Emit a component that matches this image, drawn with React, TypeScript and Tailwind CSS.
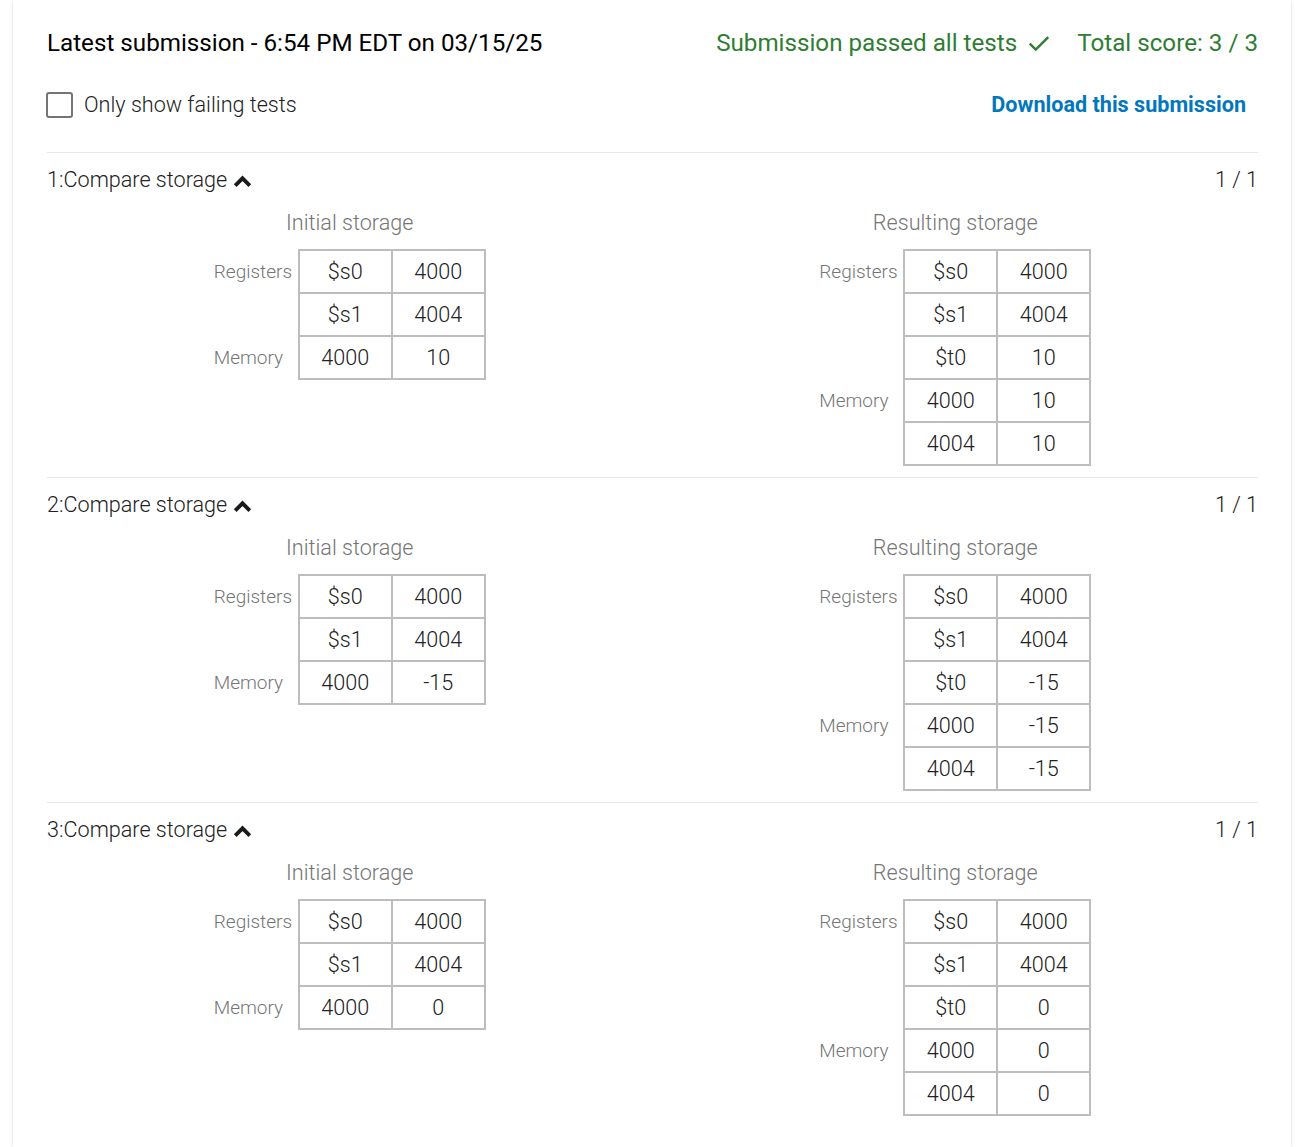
import React from "react";

type Row = [string, string];
type Storage = { regs: Row[]; mem: Row[] };
type Test = { id: number; initial: Storage; result: Storage };

const mk = (v: string): Storage[] => [
  { regs: [["$s0", "4000"], ["$s1", "4004"]], mem: [["4000", v]] },
  { regs: [["$s0", "4000"], ["$s1", "4004"], ["$t0", v]], mem: [["4000", v], ["4004", v]] },
];

const tests: Test[] = ["10", "-15", "0"].map((v, i) => {
  const [initial, result] = mk(v);
  return { id: i + 1, initial, result };
});

function Chevron() {
  return (
    <svg width="19" height="12" viewBox="0 0 19 12" className="ml-[6px] mt-[1px]">
      <path d="M2.2 10.6 L9.5 3.3 L16.8 10.6" fill="none" stroke="#1a1a1a" strokeWidth="3.8" strokeLinejoin="miter" />
    </svg>
  );
}

function Check() {
  return (
    <svg width="26" height="26" viewBox="0 0 24 24" className="ml-[9px]">
      <path d="M3.5 12.5 L9 18 L20.5 6.5" fill="none" stroke="#2e7d32" strokeWidth="2.2" />
    </svg>
  );
}

function StorageTable({ title, s }: { title: string; s: Storage }) {
  const rows = [...s.regs, ...s.mem];
  return (
    <div className="flex flex-col items-center">
      <div className="h-[28px] leading-[28px] text-[21.6px] font-light text-[#757575]">{title}</div>
      <div className="mt-[12px] flex">
        <div className="w-[84px] pt-[2px] text-[19px] font-light text-[#757575]">
          <div className="leading-[41px]" style={{ height: s.regs.length * 43 }}>
            Registers
          </div>
          <div className="leading-[41px]" style={{ height: s.mem.length * 43 }}>
            Memory
          </div>
        </div>
        <div className="grid grid-cols-[91px_91px] gap-[2px] p-[2px] bg-[#bdbdbd]">
          {rows.map((r, i) => (
            <React.Fragment key={i}>
              <div className="h-[41px] pt-[1px] bg-white flex items-center justify-center text-[21.6px] font-light text-[#212121]">
                {r[0]}
              </div>
              <div className="h-[41px] pt-[1px] bg-white flex items-center justify-center text-[21.6px] font-light text-[#212121]">
                {r[1]}
              </div>
            </React.Fragment>
          ))}
        </div>
      </div>
    </div>
  );
}

export default function App() {
  return (
    <div className="bg-white min-h-[1147px] w-full font-['Roboto',sans-serif]">
      <div className="ml-[13px] w-[1278px] min-h-[1147px] bg-white shadow-[0_0_3px_rgba(0,0,0,0.16)] pt-[28px] pl-[34px] pr-[33px]">
        <div className="flex items-center justify-between h-[30px]">
          <div className="text-[24.2px] text-black">Latest submission - 6:54 PM EDT on 03/15/25</div>
          <div className="flex items-center text-[24.2px] text-[#2e7d32]">
            <span>Submission passed all tests</span>
            <Check />
            <span className="ml-[25px]">Total score: 3 / 3</span>
          </div>
        </div>
        <div className="mt-[32px] flex items-center justify-between h-[30px]">
          <label className="flex items-center">
            <span className="-ml-[1px] w-[27px] h-[26px] border-2 border-[#757575] rounded-[3px] bg-white" />
            <span className="ml-[11px] text-[21.6px] font-light text-[#212121]">Only show failing tests</span>
          </label>
          <a className="mr-[12px] text-[21.6px] font-bold text-[#0277bd]">Download this submission</a>
        </div>
        <div className="mt-[32px]">
          {tests.map((t) => (
            <div key={t.id} className="border-t border-[#e8e8e8] pt-[13px] pb-[11px]">
              <div className="flex items-center justify-between h-[28px]">
                <div className="flex items-center text-[21.6px] font-light text-[#212121]">
                  <span>{t.id}:Compare storage</span>
                  <Chevron />
                </div>
                <div className="text-[21.6px] font-light text-[#212121]">1 / 1</div>
              </div>
              <div className="mt-[15px] grid grid-cols-2 items-start">
                <StorageTable title="Initial storage" s={t.initial} />
                <StorageTable title="Resulting storage" s={t.result} />
              </div>
            </div>
          ))}
        </div>
      </div>
    </div>
  );
}
